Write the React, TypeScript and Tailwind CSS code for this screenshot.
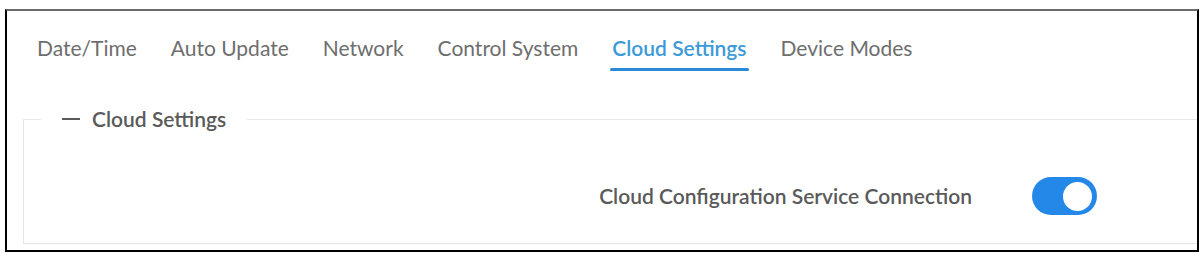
import { useState } from 'react'

const tabs = ['Date/Time', 'Auto Update', 'Network', 'Control System', 'Cloud Settings', 'Device Modes']

export default function App() {
  const [active, setActive] = useState('Cloud Settings')
  const [enabled, setEnabled] = useState(true)

  return (
    <div className="w-[1204px] h-[254px] bg-white pt-[9px] pl-[5px] font-['Lato','Open_Sans',sans-serif]">
      <div className="w-[1194px] h-[243px] border-2 border-black border-t-[#6b6b6b] overflow-hidden">
        {/* Tabs */}
        <div className="flex gap-[34px] pl-[30px] pt-[24px]">
          {tabs.map((t) => (
            <button
              key={t}
              onClick={() => setActive(t)}
              className={
                t === active
                  ? 'relative pb-[9px] text-[21px] leading-[25px] text-[#3c9ad8] font-semibold'
                  : 'relative pb-[9px] text-[21px] leading-[25px] text-[#6e6e6e]'
              }
            >
              {t}
              {t === active && (
                <span className="absolute left-[-2px] right-[-2px] bottom-[-2px] h-[3px] bg-[#2a89d6] rounded-full" />
              )}
            </button>
          ))}
        </div>

        {/* Cloud Settings group */}
        <fieldset className="ml-[16px] mt-[37px] w-[1180px] h-[138px] border border-[#e6e6e6] border-r-0">
          <legend className="ml-[17px] px-[21px] flex items-center gap-[12px] text-[21px] leading-[26px] font-semibold text-[#5a5a5a]">
            <span className="w-[18px] h-[2px] bg-[#5a5a5a]" />
            Cloud Settings
          </legend>
          <div className="flex items-center justify-end gap-[60px] pr-[106px] pt-[45px]">
            <span className="text-[21px] leading-[26px] font-semibold text-[#5a5a5a]">
              Cloud Configuration Service Connection
            </span>
            <button
              onClick={() => setEnabled(!enabled)}
              className={
                enabled
                  ? 'w-[65px] h-[38px] rounded-full bg-[#2488e8] flex items-center justify-end px-[5px]'
                  : 'w-[65px] h-[38px] rounded-full bg-[#c8c8c8] flex items-center justify-start px-[5px]'
              }
            >
              <span className="w-[29px] h-[29px] rounded-full bg-white" />
            </button>
          </div>
        </fieldset>
      </div>
    </div>
  )
}
